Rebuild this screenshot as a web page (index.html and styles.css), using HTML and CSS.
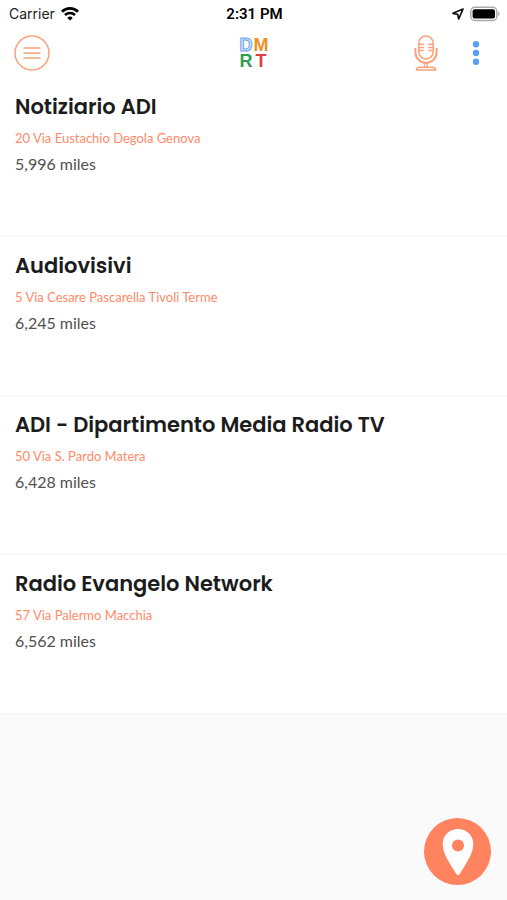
FILE: index.html
```html
<!DOCTYPE html>
<html lang="it">
<head>
    <meta charset="UTF-8">
    <meta name="viewport" content="width=device-width, initial-scale=1.0">
    <title>DMRT</title>
    <link rel="stylesheet" href="styles.css">
</head>
<body>
    <header class="header">
        <div class="status-bar">
            <div class="status-left">
                <span>Carrier</span>
                <svg class="wifi" width="18" height="14" viewBox="0 0 18 14" fill="none" stroke="#000" stroke-width="2.6">
                    <path d="M1 4.700a11.400 11.400 0 0 1 16 0"/>
                    <path d="M4 8a7.200 7.200 0 0 1 10 0"/>
                    <path d="M9 13.600L6.300 10.900a3.800 3.800 0 0 1 5.400 0z" fill="#000" stroke="none"/>
                </svg>
            </div>
            <div class="clock">2:31 PM</div>
            <div class="status-right">
                <svg width="12" height="12" viewBox="0 0 12 12" fill="none" stroke="#111" stroke-width="1.7" stroke-linejoin="round">
                    <path d="M11 1L1 5.300l4.700 1 1 4.700z"/>
                </svg>
                <svg width="30" height="16" viewBox="0 0 30 16">
                    <rect x="0.8" y="1.3" width="26" height="13.2" rx="4" fill="#fff" stroke="#aaa" stroke-width="1.4"/>
                    <rect x="2.6" y="3.2" width="22.4" height="9.4" rx="2" fill="#000"/>
                    <path d="M28.200 5.600c1.800.6 1.800 4 0 4.600z" fill="#aaa"/>
                </svg>
            </div>
        </div>

        <nav class="navbar">
            <div class="nav-left">
                <button class="icon-button" aria-label="Menu">
                    <svg width="36" height="36" viewBox="0 0 36 36" fill="none" stroke="#f9a27c" stroke-width="1.5">
                        <circle cx="18" cy="18" r="17"/>
                        <path d="M9.500 13h17M9.500 18h17M9.500 23h17"/>
                    </svg>
                </button>
            </div>
            <div class="logo">
                <span class="logo-d">D</span>
                <span class="logo-m">M</span>
                <span class="logo-r">R</span>
                <span class="logo-t">T</span>
            </div>
            <div class="nav-right">
                <button class="icon-button" aria-label="Microfono">
                    <svg width="26" height="36" viewBox="0 0 26 36" fill="none" stroke="#f9a27c" stroke-width="1.5">
                        <rect x="5.8" y="1" width="14.4" height="23" rx="7.2"/>
                        <path d="M5.800 9.200h5M5.800 12.400h5M5.800 15.600h5M20.200 9.200h-5M20.200 12.400h-5M20.200 15.600h-5"/>
                        <path d="M2.400 13v4.300a10.600 10.600 0 0 0 21.200 0V13" stroke-width="2"/>
                        <path d="M11.800 28.500v3.700M14.200 28.500v3.700" stroke-width="1.2"/>
                        <path d="M3.500 35c0-1.800 1.200-2.800 3-2.800h13c1.800 0 3 1 3 2.800z"/>
                    </svg>
                </button>
                <button class="icon-button" aria-label="Altro">
                    <svg width="8" height="24" viewBox="0 0 8 24" fill="#5b9ff5">
                        <circle cx="4" cy="3.2" r="3.2"/>
                        <circle cx="4" cy="12" r="3.2"/>
                        <circle cx="4" cy="20.8" r="3.2"/>
                    </svg>
                </button>
            </div>
        </nav>
    </header>

    <main class="places">
        <article class="place">
            <h2>Notiziario ADI</h2>
            <p class="address">20 Via Eustachio Degola Genova</p>
            <p class="distance">5,996 miles</p>
        </article>
        <article class="place">
            <h2>Audiovisivi</h2>
            <p class="address">5 Via Cesare Pascarella Tivoli Terme</p>
            <p class="distance">6,245 miles</p>
        </article>
        <article class="place">
            <h2>ADI - Dipartimento Media Radio TV</h2>
            <p class="address">50 Via S. Pardo Matera</p>
            <p class="distance">6,428 miles</p>
        </article>
        <article class="place">
            <h2>Radio Evangelo Network</h2>
            <p class="address">57 Via Palermo Macchia</p>
            <p class="distance">6,562 miles</p>
        </article>
    </main>

    <button class="map-button" aria-label="Mappa">
        <svg width="32" height="48" viewBox="0 0 32 48">
            <path d="M16 1C7.400 1 .7 7.500.7 16c0 11 9.300 22.500 13.600 30 .8 1.300 2.600 1.300 3.400 0C22 38.500 31.300 27 31.300 16 31.300 7.500 24.600 1 16 1z" fill="#fff"/>
            <circle cx="16" cy="17.500" r="6" fill="#ff835f"/>
        </svg>
    </button>
</body>
</html>
```

FILE: styles.css
```css
* {
    box-sizing: border-box;
}
body {
    margin: 0;
    min-height: 100vh;
    background-color: #fafafa;
    font-family: Lato, sans-serif;
}
.header {
    background-color: #fff;
}
.status-bar, .navbar {
    display: grid;
    grid-template-columns: 1fr auto 1fr;
    align-items: center;
}
.status-bar {
    height: 27px;
    padding: 0 7px 0 9px;
    font-family: Inter, sans-serif;
    font-size: 14px;
    color: #222;
}
.status-left, .status-right {
    display: flex;
    align-items: center;
    gap: 6px;
}
.status-right, .nav-right {
    justify-content: flex-end;
}
.clock {
    font-family: Roboto, sans-serif;
    font-size: 15px;
    font-weight: 600;
    color: #000;
}
.navbar {
    height: 51px;
    padding: 0 14px;
}
.nav-left, .nav-right {
    display: flex;
    align-items: center;
}
.nav-right {
    gap: 33px;
    padding-right: 13px;
}
.icon-button {
    display: flex;
    padding: 0;
    border: none;
    background: none;
    cursor: pointer;
}
.logo {
    display: grid;
    grid-template-columns: 15px 15px;
    grid-auto-rows: 16px;
    font-family: "Liberation Sans", Arial, sans-serif;
    font-size: 18px;
    font-weight: bold;
    line-height: 16px;
    text-align: center;
}
.logo-d {
    color: #d3e5fb;
    -webkit-text-stroke: 1px #6ba3ee;
}
.logo-m {
    color: #f0901e;
}
.logo-r {
    color: #2f9e50;
}
.logo-t {
    color: #dc4040;
}
.place {
    height: 159px;
    padding: 13px 15px;
    background-color: #fff;
    border-bottom: 1px solid #f7f7f7;
}
.place h2 {
    margin: 0;
    font-family: Poppins, Inter, sans-serif;
    font-size: 21px;
    font-weight: 600;
    line-height: 32px;
    color: #1c1c1c;
}
.place p {
    margin: 0;
}
.place .address {
    font-size: 13px;
    line-height: 30px;
    color: #ff8a69;
}
.place .distance {
    font-size: 16px;
    line-height: 22px;
    color: #505050;
}
.map-button {
    position: fixed;
    right: 16px;
    bottom: 15px;
    display: flex;
    align-items: center;
    justify-content: center;
    width: 67px;
    height: 67px;
    padding: 0;
    border: none;
    border-radius: 50%;
    background-color: #ff835f;
    cursor: pointer;
}
```
